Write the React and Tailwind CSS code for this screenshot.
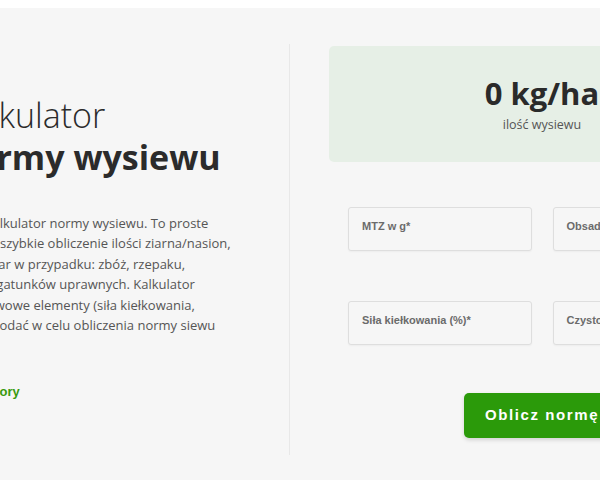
export default function App() {
  const fields = ["MTZ w g*", "Obsada roślin na m²*", "Siła kiełkowania (%)*", "Czystość nasion (%)*"];

  return (
    <div className="h-[480px] w-[600px] overflow-hidden bg-white pt-2 font-['Open_Sans',sans-serif]">
      <section className="h-full bg-[#f6f6f6] pt-[36px]">
        <div className="ml-[-47px] flex w-[900px]">
          <div className="h-[411px] w-[337px] shrink-0 border-r border-[#e8e8e8] pt-[50px]">
            <h1 className="text-[34px] leading-[42px] text-[#2b2b2b]">
              <span className="block font-light">Kalkulator</span>
              <span className="block font-bold">normy wysiewu</span>
            </h1>
            <div className="mt-[35px] whitespace-nowrap text-[13px] leading-[20.4px] text-[#555]">
              <p>Nasz kalkulator normy wysiewu. To proste</p>
              <p>ułatwia szybkie obliczenie ilości ziarna/nasion,</p>
              <p>na hektar w przypadku: zbóż, rzepaku,</p>
              <p>innych gatunków uprawnych. Kalkulator</p>
              <p>podstawowe elementy (siła kiełkowania,</p>
              <p>warto podać w celu obliczenia normy siewu</p>
            </div>
            <a
              href="#"
              className="-ml-[4px] mt-[49px] block font-['Liberation_Sans',sans-serif] text-[13px] font-bold leading-4 text-[#3a9a0f]"
            >
              Kalkulatory
            </a>
          </div>

          <div className="pl-[39px] pt-[2px]">
            <div className="flex h-[116px] w-[426px] flex-col items-center justify-center rounded-[5px] bg-[#e6efe6]">
              <div className="text-[31px] font-bold leading-[38px] text-[#2a2a2a]">0 kg/ha</div>
              <div className="mt-[4px] text-[12.5px] leading-[18px] text-[#555]">ilość wysiewu</div>
            </div>

            <div className="mt-[45px] grid w-[426px] grid-cols-2 gap-x-[21px] gap-y-[50px] px-[19px]">
              {fields.map((f) => (
                <label
                  key={f}
                  className="block h-[44px] rounded-[3px] border border-[#dedede] bg-[#f6f6f6] px-[13px] pt-[12px] shadow-[0_1px_2px_rgba(0,0,0,0.04)]"
                >
                  <span className="block font-['Liberation_Sans',sans-serif] text-[11px] font-bold leading-[13px] text-[#6b6b6b]">
                    {f}
                  </span>
                  <input type="text" className="h-[16px] w-full bg-transparent outline-none" />
                </label>
              ))}
            </div>

            <div className="mt-[48px] flex w-[426px] justify-center">
              <button
                type="button"
                className="h-[45px] rounded-[5px] bg-[#2b9a0a] px-[21px] font-['Liberation_Sans',sans-serif] text-[15px] font-bold tracking-[1.6px] text-white shadow-[0_2px_4px_rgba(0,0,0,0.15)]"
              >
                Oblicz normę
              </button>
            </div>
          </div>
        </div>
      </section>
    </div>
  );
}
